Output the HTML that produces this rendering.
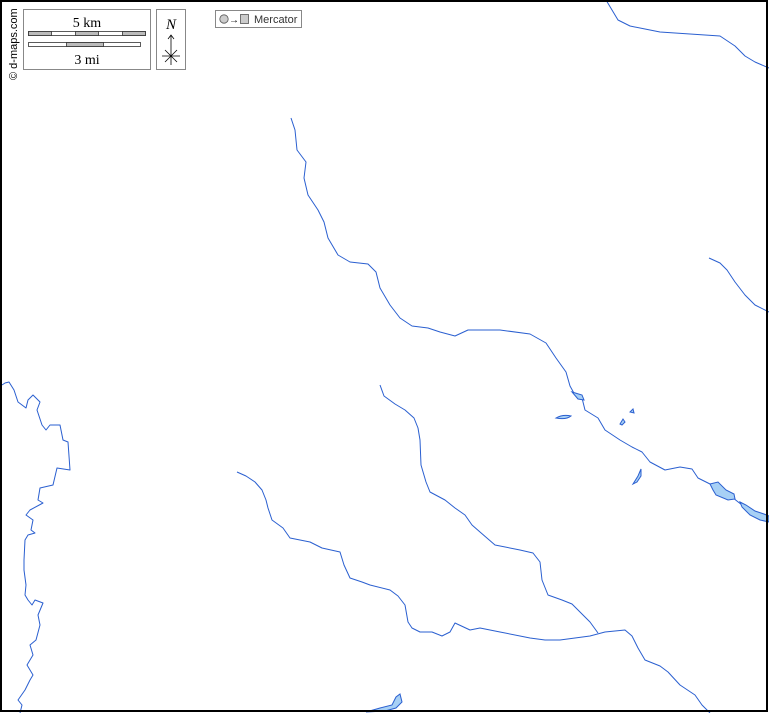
<!DOCTYPE html>
<html><head><style>
html,body{margin:0;padding:0;background:#fff;}
body{width:769px;height:713px;overflow:hidden;position:relative;font-family:"Liberation Sans",sans-serif;}
</style></head><body>
<svg width="769" height="713" viewBox="0 0 769 713" xmlns="http://www.w3.org/2000/svg" style="position:absolute;left:0;top:0">
<rect x="0" y="0" width="769" height="713" fill="#fff"/>
<g fill="none" stroke="#2a5fd0" stroke-width="1" stroke-linejoin="round">
<polyline points="606,0 612,10 618,20 630,26 645,29 660,32 690,34 720,36 735,46 745,56 755,62 769,68"/>
<polyline points="709,258 720,263 727,270 735,282 745,295 755,305 769,312"/>
<polyline points="291,118 295,130 297,150 306,162 304,178 308,195 318,210 324,222 328,238 338,255 350,262 368,264 376,272 380,288 390,305 400,318 412,326 428,328 440,332 455,336 468,330 500,330 530,334 546,343 556,358 566,372 570,386 575,395 582,398 585,410 598,418 605,430 620,440 632,447 642,452 650,462 665,470 680,467 692,469 698,478 712,485 728,494 742,505 755,513 769,520"/>
<polyline points="2,385 5,383 9,382 14,390 18,402 26,408 28,400 33,395 40,402 37,410 42,425 46,430 50,425 60,425 63,440 68,442 70,470 57,468 53,485 40,488 38,500 43,503 30,510 26,515 33,520 31,530 35,533 28,535 25,540 24,560 24,570 26,585 25,595 28,600 32,605 35,600 43,603 38,615 40,625 36,640 30,645 33,655 27,665 33,675 30,680 25,690 18,700 22,705 20,713"/>
<polyline points="380,385 384,396 395,404 405,410 414,418 418,428 420,440 421,465 426,482 430,492 445,500 455,508 465,515 472,525 480,532 495,545 520,550 533,553 540,562 542,580 548,595 562,600 572,604 582,614 590,622 598,633"/>
<polyline points="237,472 246,476 255,482 262,490 266,500 268,508 272,520 283,528 290,538 310,542 322,548 340,552 344,565 350,578 362,582 370,585 390,590 398,596 405,605 408,622 412,628 420,632 432,632 442,636 450,632 455,623 470,630 480,628 500,632 530,638 545,640 560,640 575,638 590,636 605,632 625,630 632,636 638,648 645,660 660,666 668,672 680,685 695,695 702,705 710,713"/>
</g>
<g fill="#a7d0f5" stroke="#2a5fd0" stroke-width="1">
<path d="M556,418 Q563,414 571,416 Q566,420 556,418 Z"/>
<path d="M572,392 L582,395 L584,400 L578,399 Z"/>
<path d="M630,412 L633,409 L634,413 Z"/>
<path d="M620,424 L623,419 L625,422 L622,425 Z"/>
<path d="M633,484 L638,476 L641,469 L641,476 L637,482 Z"/>
<path d="M710,484 L718,482 L726,490 L734,494 L735,499 L728,500 L716,495 L713,490 Z"/>
<path d="M740,502 L746,505 L755,511 L764,514 L769,516 L769,522 L760,520 L750,515 L742,507 Z"/>
<path d="M366,712 L380,708 L392,705 L396,697 L400,694 L402,702 L396,708 L385,711 Z"/>
</g>
<rect x="1" y="1" width="766" height="710" fill="none" stroke="#000" stroke-width="2"/>
<!-- scale -->
<rect x="23.5" y="9.5" width="127" height="60" fill="#fff" stroke="#888"/>
<text x="87" y="27" font-family="Liberation Serif,serif" font-size="14" text-anchor="middle">5 km</text>
<g stroke="#333" stroke-width="0.8">
<rect x="28.5" y="31.5" width="117" height="4" fill="#fff"/>
<rect x="28.5" y="31.5" width="23" height="4" fill="#bbb"/>
<rect x="75.5" y="31.5" width="23" height="4" fill="#bbb"/>
<rect x="122.5" y="31.5" width="23" height="4" fill="#bbb"/>
<rect x="28.5" y="42.5" width="112" height="4" fill="#fff"/>
<rect x="66.5" y="42.5" width="37" height="4" fill="#bbb"/>
</g>
<text x="87" y="64" font-family="Liberation Serif,serif" font-size="14" text-anchor="middle">3 mi</text>
<rect x="156.5" y="9.5" width="29" height="60" fill="#fff" stroke="#888"/>
<text x="171" y="29" font-family="Liberation Serif,serif" font-style="italic" font-size="15" text-anchor="middle">N</text>
<g stroke="#000" stroke-width="0.8" fill="none">
<line x1="171" y1="35" x2="171" y2="65"/>
<polyline points="168,39 171,35 174,39"/>
<line x1="162" y1="56" x2="180" y2="56"/>
<line x1="165" y1="50" x2="177" y2="62"/>
<line x1="177" y1="50" x2="165" y2="62"/>
</g>
<text transform="translate(17,80) rotate(-90)" font-size="11" fill="#000">© d-maps.com</text>
<rect x="215.5" y="10.5" width="86" height="17" fill="#fff" stroke="#888"/>
<circle cx="224" cy="19" r="4.2" fill="#ccc" stroke="#555" stroke-width="0.8"/>
<text x="229" y="23" font-size="10">→</text>
<rect x="240.5" y="14.5" width="8" height="9" fill="#ccc" stroke="#555" stroke-width="0.8"/>
<text x="254" y="23" font-size="11" fill="#333">Mercator</text>
</svg>
</body></html>
